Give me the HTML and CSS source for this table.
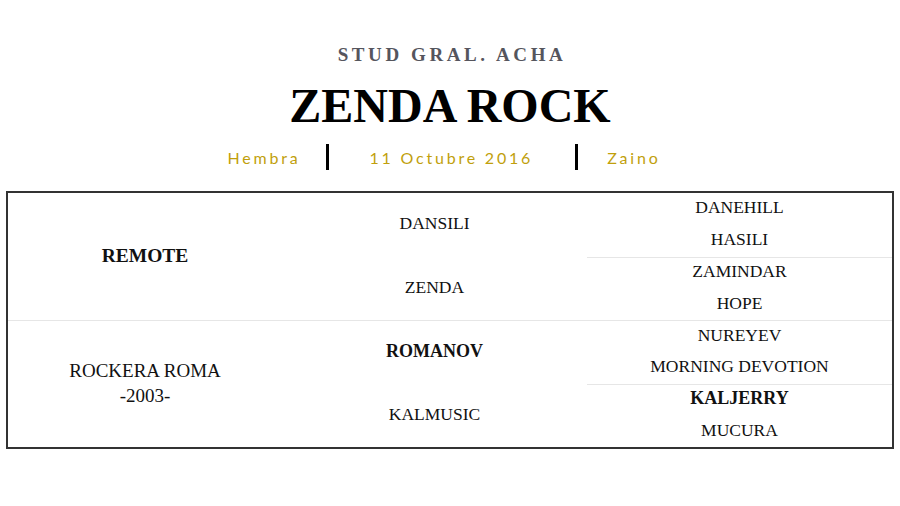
FILE: index.html
```html
<!DOCTYPE html>
<html>
<head>
<meta charset="utf-8">
<link rel="stylesheet" href="styles.css">
</head>
<body>
<header class="head">
  <div class="stud">STUD GRAL. ACHA</div>
  <h1 class="title">ZENDA ROCK</h1>
  <div class="meta">
    <span class="m m1">Hembra</span>
    <span class="bar"></span>
    <span class="m m2">11 Octubre 2016</span>
    <span class="bar"></span>
    <span class="m m3">Zaino</span>
  </div>
</header>
<section class="ped">
  <div class="c c1 r1"><b>REMOTE</b></div>
  <div class="c c1 r2 sep"><span>ROCKERA ROMA<br>-2003-</span></div>
  <div class="c c2 g1">DANSILI</div>
  <div class="c c2 g2">ZENDA</div>
  <div class="c c2 g3 sep"><b>ROMANOV</b></div>
  <div class="c c2 g4">KALMUSIC</div>
  <div class="c c3">DANEHILL</div>
  <div class="c c3">HASILI</div>
  <div class="c c3 sep">ZAMINDAR</div>
  <div class="c c3">HOPE</div>
  <div class="c c3 sep">NUREYEV</div>
  <div class="c c3">MORNING DEVOTION</div>
  <div class="c c3 sep"><b>KALJERRY</b></div>
  <div class="c c3">MUCURA</div>
</section>
</body>
</html>
```
FILE: styles.css
```css
html, body { margin: 0; padding: 0; background: #fff; }
body { width: 900px; height: 506px; overflow: hidden; font-family: "Liberation Serif", serif; color: #111; }
.head { text-align: center; padding-top: 43px; }
.stud { font-size: 19px; line-height: 24px; font-weight: bold; letter-spacing: 3.6px; color: #55555d; padding-left: 4px; }
.title { margin: 14px 0 0; font-size: 48px; line-height: 50px; font-weight: bold; color: #000; }
.meta { margin-top: 13px; height: 26px; display: flex; justify-content: center; align-items: center; font-family: "Lato", "Open Sans", sans-serif; font-size: 16px; letter-spacing: 2.8px; color: #c19f0c; padding-right: 12px; }
.bar { width: 3px; height: 26px; background: #000; }
.m1 { margin-right: 26px; }
.m2 { margin: 0 42px 0 40px; }
.m3 { margin-left: 29px; }
.ped { box-sizing: border-box; margin: 21px 0 0 6px; width: 888px; height: 258px; border: 2px solid #333; display: grid; grid-template-columns: 274px 305px 1fr; grid-template-rows: repeat(8, 1fr); }
.c { display: flex; align-items: center; justify-content: center; text-align: center; font-size: 17.5px; line-height: 25px; box-sizing: border-box; padding-bottom: 2px; }
.c b { font-size: 18px; }
.sep { border-top: 1px solid #e6e6e6; }
.c1 { grid-column: 1; font-size: 19px; }
.c1 b { font-size: 19.5px; }
.r1 { grid-row: 1 / 5; }
.r2 { grid-row: 5 / 9; }
.c2 { grid-column: 2; }
.g1 { grid-row: 1 / 3; }
.g2 { grid-row: 3 / 5; }
.g3 { grid-row: 5 / 7; }
.g4 { grid-row: 7 / 9; }
.c3 { grid-column: 3; }
```
